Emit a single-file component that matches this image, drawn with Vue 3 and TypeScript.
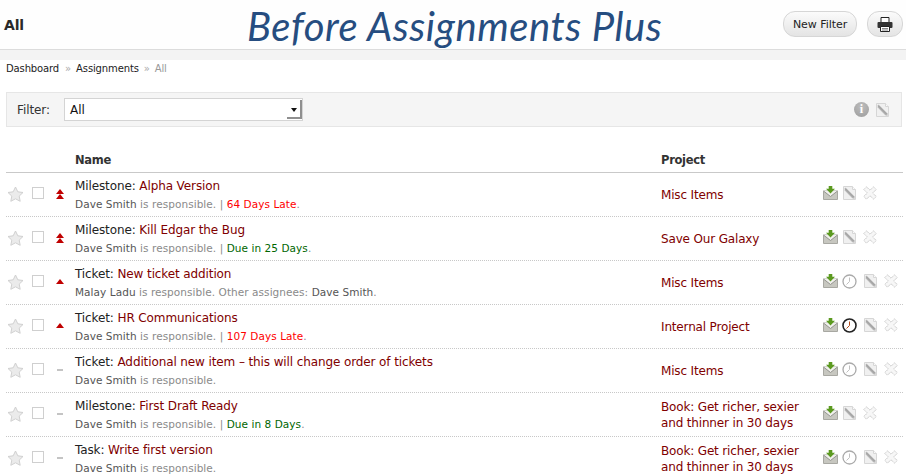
<script setup lang="ts">
interface Row {
  kind: string
  title: string
  pri: 'high' | 'normal' | 'none'
  who: string
  other?: string
  status?: string
  statusClass?: string
  project: string
  clock?: 'off' | 'on'
}
const rows: Row[] = [
  { kind: 'Milestone', title: 'Alpha Version', pri: 'high', who: 'Dave Smith', status: '64 Days Late', statusClass: 'late', project: 'Misc Items' },
  { kind: 'Milestone', title: 'Kill Edgar the Bug', pri: 'high', who: 'Dave Smith', status: 'Due in 25 Days', statusClass: 'due', project: 'Save Our Galaxy' },
  { kind: 'Ticket', title: 'New ticket addition', pri: 'normal', who: 'Malay Ladu', other: 'Dave Smith', project: 'Misc Items', clock: 'off' },
  { kind: 'Ticket', title: 'HR Communications', pri: 'normal', who: 'Dave Smith', status: '107 Days Late', statusClass: 'late', project: 'Internal Project', clock: 'on' },
  { kind: 'Ticket', title: 'Additional new item – this will change order of tickets', pri: 'none', who: 'Dave Smith', project: 'Misc Items', clock: 'off' },
  { kind: 'Milestone', title: 'First Draft Ready', pri: 'none', who: 'Dave Smith', status: 'Due in 8 Days', statusClass: 'due', project: 'Book: Get richer, sexier and thinner in 30 days' },
  { kind: 'Task', title: 'Write first version', pri: 'none', who: 'Dave Smith', project: 'Book: Get richer, sexier and thinner in 30 days', clock: 'off' },
]
</script>

<template>
  <div class="page">
    <svg class="defs" width="0" height="0" aria-hidden="true">
      <defs>
        <symbol id="i-edit" viewBox="0 0 13 14">
          <path d="M.5.500h9l3 3v10H.5z" fill="#f0f0f0" stroke="#d6d6d6" />
          <path d="M2.500 1.500l9 9v2.200l-2.200-.4-7.800-8z" fill="#b4b4b4" />
          <path d="M2 2.500l8.500 8.500" stroke="#8f8f8f" stroke-width=".7" />
          <path d="M9.500.500v3h3" fill="#fafafa" stroke="#d6d6d6" />
        </symbol>
        <symbol id="i-x" viewBox="0 0 14 14">
          <path d="M3.500.800L7 4.300 10.500.800 13.200 3.500 9.700 7 13.200 10.500 10.500 13.200 7 9.700 3.500 13.200.800 10.500 4.300 7 .800 3.500z" fill="#f7f7f7" stroke="#c9c9c9" stroke-dasharray="1.300 .5" />
        </symbol>
        <symbol id="i-mail" viewBox="0 0 15 14">
          <path d="M.5 5h14v8.500H.5z" fill="#c7c7c0" stroke="#a8a8a2" />
          <path d="M.5 5l7 5.500 7-5.500" fill="#f0f0ec" stroke="#94948f" />
          <path d="M5.700 0h3.600v2.800H12L7.500 7.500 3 2.800h2.700z" fill="#5c9a20" />
        </symbol>
      </defs>
    </svg>

    <header class="topbar">
      <h1 class="page-title">All</h1>
      <div class="hand">Before Assignments Plus</div>
      <div class="top-actions">
        <button class="pill" type="button">New Filter</button>
        <button class="pill print" type="button" aria-label="Print">
          <svg width="16" height="15" viewBox="0 0 16 15">
            <path d="M4 .5h8v5H4z" fill="#fff" stroke="#222" />
            <rect x="0.500" y="5" width="15" height="6" rx="1" fill="#333" />
            <path d="M3.500 9.500h9v5h-9z" fill="#fff" stroke="#222" />
            <path d="M5 11.500h6M5 13h6" stroke="#888" />
          </svg>
        </button>
      </div>
    </header>
    <div class="band"></div>

    <nav class="crumbs">
      <span>Dashboard</span><i>»</i><span>Assignments</span><i>»</i><em>All</em>
    </nav>

    <section class="filter">
      <label class="filter-label">Filter:</label>
      <div class="select">
        <span>All</span>
        <b class="sel-btn"><u></u></b>
      </div>
      <div class="filter-icons">
        <span class="info">i</span>
        <svg width="13" height="14"><use href="#i-edit" /></svg>
      </div>
    </section>

    <div class="thead">
      <div class="c-name">Name</div>
      <div class="c-proj">Project</div>
    </div>

    <div v-for="r in rows" :key="r.title" class="row">
      <div class="c-star">
        <svg width="17" height="16" viewBox="0 0 17 16">
          <path d="M8.500 1l2.300 4.800 5.200.7-3.800 3.600 1 5.200-4.700-2.500-4.700 2.500 1-5.200L1 6.500l5.200-.7z" fill="#ebebeb" stroke="#d0d0d0" />
        </svg>
      </div>
      <div class="c-check"><span class="box"></span></div>
      <div class="c-pri">
        <template v-if="r.pri === 'high'"><span class="tri"></span><span class="tri"></span></template>
        <span v-else-if="r.pri === 'normal'" class="tri"></span>
        <span v-else class="dash"></span>
      </div>
      <div class="c-name">
        <div class="title">{{ r.kind }}: <span class="link">{{ r.title }}</span></div>
        <div class="meta">
          <span class="who">{{ r.who }}</span> is responsible.
          <template v-if="r.other">Other assignees: <span class="who">{{ r.other }}</span>.</template>
          <template v-if="r.status">| <span :class="r.statusClass">{{ r.status }}</span>.</template>
        </div>
      </div>
      <div class="c-proj link">{{ r.project }}</div>
      <div class="c-act">
        <svg width="15" height="14"><use href="#i-mail" /></svg>
        <svg v-if="r.clock" class="clock" :class="r.clock" width="15" height="15" viewBox="0 0 15 15">
          <circle cx="7.500" cy="7.500" r="6.500" fill="#fff" />
          <path d="M7.500 3.500v4L4.500 10.500" fill="none" stroke-width="1" />
        </svg>
        <svg width="13" height="14" :class="r.clock ? 'gap-c' : 'gap-e'"><use href="#i-edit" /></svg>
        <svg class="gap-x" width="14" height="14"><use href="#i-x" /></svg>
      </div>
    </div>
  </div>
</template>

<style scoped>
.page {
  width: 906px;
  height: 476px;
  overflow: hidden;
  background: #fff;
  color: #222;
  font-family: "DejaVu Sans", sans-serif;
  font-size: 12px;
}
.defs { position: absolute; }
.topbar {
  height: 49px;
  display: flex;
  align-items: center;
  padding: 0 3px 0 4px;
  border-bottom: 1px solid #dcdcdc;
  background: #fefefe;
}
.page-title {
  width: 243px;
  margin: 1px 0 0;
  font-size: 14px;
  font-weight: 700;
  letter-spacing: -0.2px;
  color: #2a2a2a;
}
.hand {
  width: 530px;
  padding-top: 4px;
  font-family: "Lato", sans-serif;
  font-style: italic;
  font-size: 40px;
  line-height: 45px;
  letter-spacing: 0.55px;
  color: #264d80;
  white-space: nowrap;
}
.top-actions {
  margin-left: auto;
  display: flex;
  gap: 10px;
  padding-bottom: 1px;
}
.pill {
  height: 26px;
  width: 74px;
  padding: 0;
  border: 1px solid #d6d6d6;
  border-radius: 12px;
  background: linear-gradient(#fbfbfb, #e4e4e4);
  font: 11px "DejaVu Sans", sans-serif;
  letter-spacing: -0.05px;
  color: #222;
}
.print {
  width: 36px;
  display: flex;
  align-items: center;
  justify-content: center;
}
.band { height: 10px; background: #f3f3f3; }
.crumbs {
  height: 32px;
  padding: 3px 0 0 6px;
  font-size: 10px;
  line-height: 12px;
  letter-spacing: -0.13px;
  color: #222;
  box-sizing: border-box;
}
.crumbs i { font-style: normal; color: #aaa; margin: 0 5px 0 6px; }
.crumbs i + span { margin-right: -1px; }
.crumbs em { font-style: normal; color: #999; }
.filter {
  margin: 0 4px 0 6px;
  height: 35px;
  box-sizing: border-box;
  display: flex;
  align-items: center;
  background: #f5f5f5;
  border: 1px solid #e6e6e6;
  padding: 0 12px 0 10px;
}
.filter-label { width: 47px; font-size: 12px; letter-spacing: -0.1px; color: #333; }
.select {
  width: 239px;
  height: 23px;
  box-sizing: border-box;
  border: 1px solid #d4d4d4;
  background: #fff;
  display: flex;
  align-items: center;
  justify-content: space-between;
  padding: 0 0 0 5px;
  font-size: 12px;
  color: #111;
}
.sel-btn {
  width: 15px;
  height: 19px;
  box-sizing: border-box;
  border-right: 2px solid #8f8f8f;
  border-bottom: 2px solid #8f8f8f;
  display: flex;
  justify-content: center;
  padding-top: 8px;
}
.sel-btn u {
  width: 0;
  height: 0;
  border: 3.500px solid transparent;
  border-top: 4px solid #111;
  border-bottom: 0;
}
.filter-icons { margin-left: auto; display: flex; align-items: center; gap: 7px; }
.info {
  width: 15px;
  height: 15px;
  border-radius: 50%;
  background: radial-gradient(circle at 50% 30%, #bdbdbd, #9c9c9c);
  color: #fff;
  font: 700 12px/15px "Liberation Serif", serif;
  text-align: center;
}
.thead {
  margin: 0 3px 0 6px;
  padding-left: 69px;
  height: 46px;
  box-sizing: border-box;
  border-bottom: 1px solid #c9c9c9;
  display: flex;
  align-items: flex-end;
  padding-bottom: 5px;
  font-weight: 700;
  font-size: 11.500px;
  letter-spacing: -0.3px;
  color: #333;
}
.thead .c-name { flex: 0 0 586px; }
.row {
  margin: 0 3px 0 6px;
  height: 44px;
  box-sizing: border-box;
  border-bottom: 1px dotted #c8c8c8;
  display: flex;
  align-items: center;
}
.c-star { width: 17px; margin: 0 0 2px 1px; display: flex; }
.c-check { width: 12px; margin: 0 0 3px 8px; display: flex; }
.box {
  width: 12px;
  height: 12px;
  box-sizing: border-box;
  border: 1px solid #cfcfcf;
  background: #fff;
}
.c-pri {
  width: 9px;
  margin-left: 11px;
  margin-right: 1px;
  display: flex;
  flex-direction: column;
  align-items: center;
  justify-content: center;
  margin-bottom: 2px;
}
.tri {
  width: 0;
  height: 0;
  border-left: 4px solid transparent;
  border-right: 4px solid transparent;
  border-bottom: 5px solid #c00000;
}
.dash { width: 6px; height: 2px; background: #c4c4c4; margin-top: 1px; }
.row .c-name { flex: 0 0 586px; margin-left: 10px; align-self: stretch; padding-top: 6px; box-sizing: border-box; }
.title { font-size: 12px; line-height: 14px; letter-spacing: -0.11px; color: #222; white-space: nowrap; }
.link { color: #800000; }
.meta { margin-top: 5px; font-size: 10.500px; line-height: 13px; letter-spacing: 0.06px; color: #8a8a8a; white-space: nowrap; }
.who { color: #555; }
.late { color: #f00; }
.due { color: #060; }
.row .c-proj { width: 150px; font-size: 12px; line-height: 16px; letter-spacing: -0.16px; }
.thead .c-proj { width: 150px; }
.c-act { margin-left: 12px; margin-bottom: 3px; display: flex; align-items: center; }
.clock { margin-left: 4px; }
.clock.off circle { stroke: #aaa; stroke-width: 1.300; }
.clock.off path { stroke: #c0c0c0; }
.clock.on circle { stroke: #222; stroke-width: 1.600; }
.clock.on path { stroke: #b34a18; }
.gap-e { margin-left: 5px; }
.gap-c { margin-left: 7px; }
.gap-x { margin-left: 7px; }
</style>

<style>
html, body { margin: 0; overflow: hidden; background: #fff; }
</style>
